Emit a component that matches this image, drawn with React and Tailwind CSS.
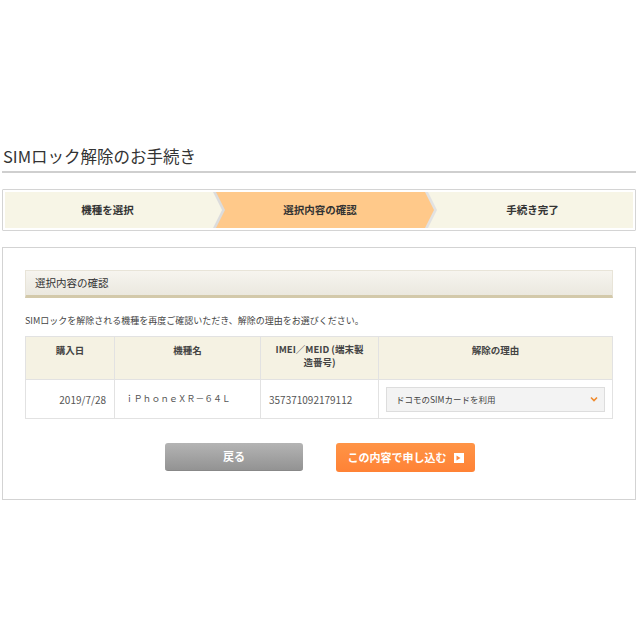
import React from "react";

const chevron =
  "[clip-path:polygon(0_0,calc(100%-9px)_0,100%_50%,calc(100%-9px)_100%,0_100%)]";

const App = () => {
  return (
    <div className="w-[640px] h-[640px] bg-white font-['Noto_Sans_CJK_JP','Noto_Sans',sans-serif] text-[#333]">
      <div className="pt-[144px] ml-[2px] w-[634px]">
        {/* Title */}
        <h1 className="pl-[1px] text-[16.5px] leading-[24px] pb-[3px] border-b-2 border-[#cfcfcf] text-[#333]">
          SIMロック解除のお手続き
        </h1>

        {/* Steps */}
        <div className="mt-[16px] h-[42px] border border-[#d4d4d4] p-[2px] bg-white rounded-[1px]">
          <div className="flex h-full">
            <div className={`relative z-20 w-[220px] shrink-0 bg-[#dcdcdc] ${chevron}`}>
              <div
                className={`h-full w-[217px] bg-[#f7f5e6] flex items-center justify-center pr-3 text-[10.5px] font-bold text-[#333] ${chevron}`}
              >
                機種を選択
              </div>
            </div>
            <div className={`relative z-10 -ml-[9px] w-[221px] shrink-0 bg-[#e2e2e2] ${chevron}`}>
              <div
                className={`h-full w-[218px] bg-[#ffc98a] flex items-center justify-center pr-[10px] text-[10.5px] font-bold text-[#333] ${chevron}`}
              >
                選択内容の確認
              </div>
            </div>
            <div className="-ml-[9px] flex-1 bg-[#f7f5e6] flex items-center justify-center pl-[4px] text-[10.5px] font-bold text-[#333]">
              手続き完了
            </div>
          </div>
        </div>

        {/* Panel */}
        <div className="mt-[16px] border border-[#d3d3d3] pt-[22px] pb-[27px] pl-[22px] pr-[22px]">
          <div className="h-[28px] border border-[#e8e4d8] border-b-[3px] border-b-[#d3c9aa] bg-gradient-to-b from-[#f6f4ef] to-[#ebe8df] flex items-center pl-[9px] text-[10.5px] text-[#333]">
            選択内容の確認
          </div>

          <p className="mt-[17px] text-[9px] leading-[12px] text-[#444]">
            SIMロックを解除される機種を再度ご確認いただき、解除の理由をお選びください。
          </p>

          <table className="mt-[9px] w-[588px] border-collapse text-[9.5px]">
            <thead>
              <tr className="h-[43px] bg-[#f5f2e3]">
                <th className="w-[89px] border border-[#e2e2e2] align-top pt-[6px] font-bold text-[#444]">
                  購入日
                </th>
                <th className="w-[146px] border border-[#e2e2e2] align-top pt-[6px] font-bold text-[#444]">
                  機種名
                </th>
                <th className="w-[118px] border border-[#e2e2e2] align-top pt-[6px] font-bold text-[#444] leading-[13px]">
                  IMEI／MEID (端末製
                  <br />
                  造番号)
                </th>
                <th className="border border-[#e2e2e2] align-top pt-[6px] font-bold text-[#444]">
                  解除の理由
                </th>
              </tr>
            </thead>
            <tbody>
              <tr className="h-[39px]">
                <td className="border border-[#e2e2e2] text-right pr-[8px] text-[10px] text-[#555]">
                  2019/7/28
                </td>
                <td className="border border-[#e2e2e2] pl-[10px] text-[8.8px] text-[#555]">
                  ｉＰｈｏｎｅＸＲ－６４Ｌ
                </td>
                <td className="border border-[#e2e2e2] pl-[8px] text-[10px] text-[#555]">
                  357371092179112
                </td>
                <td className="border border-[#e2e2e2] px-[7px]">
                  <div className="h-[25px] bg-[#f3f3f3] border border-[#dddddd] flex items-center justify-between pl-[9px] pr-[6px] text-[8.5px] text-[#444]">
                    <span>ドコモのSIMカードを利用</span>
                    <svg width="8" height="6" viewBox="0 0 8 6">
                      <path d="M1 1.5 L4 4.5 L7 1.5" fill="none" stroke="#f08a2c" strokeWidth="1.6" />
                    </svg>
                  </div>
                </td>
              </tr>
            </tbody>
          </table>

          <div className="mt-[24px] flex justify-center gap-[33px] pl-[2px]">
            <button className="w-[138px] h-[28px] rounded-[3px] bg-gradient-to-b from-[#b4b4b4] to-[#939393] border-b border-[#888] text-white text-[11px] font-bold">
              戻る
            </button>
            <button className="w-[139px] h-[29px] rounded-[3px] bg-gradient-to-b from-[#ff9446] to-[#ff8235] text-white text-[11px] font-bold flex items-center justify-center gap-[7px]">
              この内容で申し込む
              <span className="w-[10px] h-[10px] bg-white flex items-center justify-center">
                <svg width="5" height="6" viewBox="0 0 5 6">
                  <path d="M0.5 0.5 L4.5 3 L0.5 5.5 Z" fill="#ff8a3d" />
                </svg>
              </span>
            </button>
          </div>
        </div>
      </div>
    </div>
  );
};

export default App;
